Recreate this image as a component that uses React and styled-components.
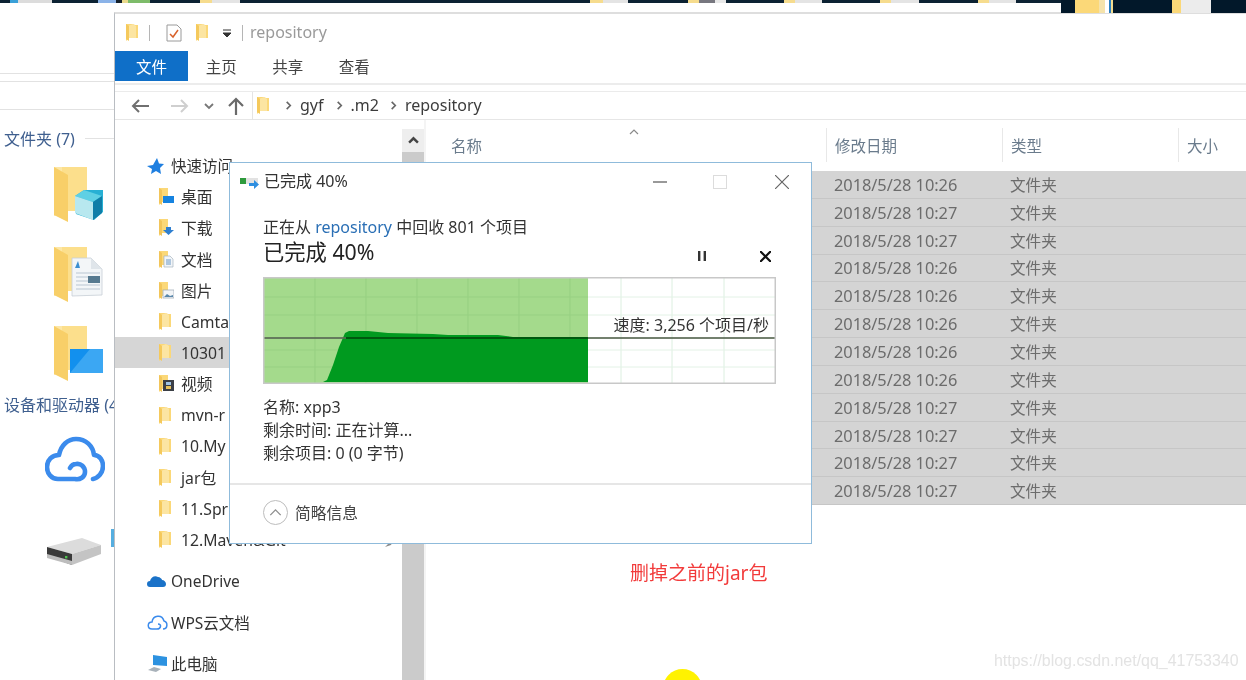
import React from "react";
import styled, { createGlobalStyle } from "styled-components";

const GlobalStyle = createGlobalStyle`
  html, body { margin: 0; padding: 0; background: #fff; }
  * { box-sizing: border-box; }
`;

const FONT = `"Noto Sans", "Noto Sans CJK SC", sans-serif`;

const Desktop = styled.div`
  position: relative;
  width: 1246px;
  height: 680px;
  overflow: hidden;
  background: #fff;
  font-family: ${FONT};
  display: flex;
  flex-direction: column;
  filter: blur(0.45px);
`;

const TopStrip = styled.div`
  flex: none;
  height: 12px;
`;
const StripBand = styled.div`
  height: 3px;
  background: linear-gradient(90deg,
    #0c2233 0 10px, #3aa0d8 10px 18px, #dcdcdc 18px 52px, #0c2233 52px 98px,
    #8bb3e8 98px 116px, #15202a 116px 122px, #e9d98c 122px 128px, #7ebc6a 128px 150px,
    #0c2233 150px 200px, #f6dc8e 200px 212px, #e4e4e4 212px 240px, #0c2233 240px 590px,
    #f6dc8e 590px 603px, #e4e4e4 603px 628px, #0c2233 628px 688px,
    #f6dc8e 688px 699px, #77777f 699px 715px, #e8e8e8 715px 726px, #0c2233 726px 784px,
    #f6dc8e 784px 795px, #e4e4e4 795px 822px, #0c2233 822px 880px,
    #f6dc8e 880px 891px, #e4e4e4 891px 919px, #0c2233 919px 978px,
    #f6dc8e 978px 989px, #e4e4e4 989px 1016px, #0c2233 1016px);
`;
const CornerThumbs = styled.div`
  position: absolute;
  top: 0;
  left: 1061px;
  width: 185px;
  height: 13px;
  background: linear-gradient(90deg,
    #02182a 0 14px, #fbd878 14px 38px, #f5e3ab 38px 44px, #ffffff 44px 48px, #2a80c0 48px 50px, #f5dc8e 50px 52px,
    #02182a 52px 111px, #fbd878 111px 120px, #ececec 120px 150px, #02182a 150px);
`;

const Body = styled.div`
  flex: 1;
  display: flex;
  min-height: 0;
`;

/* window behind the explorer */
const BackPanel = styled.div`
  flex: none;
  width: 114px;
  display: flex;
  flex-direction: column;
  overflow: hidden;
  position: relative;
`;
const PanelRule = styled.div`
  height: 1px;
  background: #e2e2e2;
  margin-top: ${(p) => p.$top}px;
`;
const GroupHead = styled.div`
  display: flex;
  align-items: center;
  height: 22px;
  padding-left: 4px;
  margin-top: ${(p) => p.$top}px;
  color: #3f5f8f;
  font-size: 16px;
  white-space: nowrap;
  &::after {
    content: "";
    flex: 1;
    height: 1px;
    background: #e2e2e2;
    margin-left: 10px;
  }
`;
const BigIcon = styled.div`
  flex: none;
  margin-top: ${(p) => p.$top}px;
  margin-left: ${(p) => p.$left}px;
  line-height: 0;
`;
const EdgeSliver = styled.div`
  position: absolute;
  left: 111px;
  top: 517px;
  width: 3px;
  height: 18px;
  background: #55aee0;
`;

/* explorer */
const Explorer = styled.div`
  flex: 1;
  min-width: 0;
  display: flex;
  flex-direction: column;
  border-top: 2px solid #dedede;
  border-left: 1px solid #b9bdc2;
`;
const TitleBar = styled.div`
  flex: none;
  height: 37px;
  display: flex;
  align-items: center;
  padding-left: 11px;
`;
const TitleSep = styled.span`
  width: 1px;
  height: 16px;
  background: #b5b5b5;
  margin: 0 ${(p) => p.$r}px 0 ${(p) => p.$l}px;
`;
const TitleText = styled.span`
  font-size: 16px;
  color: #9a9a9a;
  margin-bottom: 2px;
`;
const Ribbon = styled.div`
  flex: none;
  height: 30px;
  display: flex;
  align-items: stretch;
`;
const FileTab = styled.div`
  width: 73px;
  background: #0f6fc8;
  color: #fff;
  font-size: 15.5px;
  display: flex;
  align-items: center;
  justify-content: center;
`;
const RibbonTab = styled.div`
  width: 66.5px;
  color: #444;
  font-size: 15.5px;
  display: flex;
  align-items: center;
  justify-content: center;
  &:first-of-type { margin-left: -1px; }
`;
const RibbonSpacer = styled.div`
  flex: none;
  height: 9px;
  margin-top: 2px;
  border-top: 2px solid #ececec;
  border-bottom: 1px solid #ebebeb;
`;
const AddressRow = styled.div`
  flex: none;
  height: 28px;
  display: flex;
  align-items: center;
  border-bottom: 1px solid #e6e6e6;
`;
const NavButton = styled.span`
  display: inline-flex;
  width: ${(p) => p.$w}px;
  margin-left: ${(p) => p.$left}px;
  color: ${(p) => p.$c};
  line-height: 0;
`;
const AddressBox = styled.div`
  height: 28px;
  margin-left: 8px;
  padding-left: 4px;
  flex: 1;
  display: flex;
  align-items: center;
  border-left: 1px solid #e4e4e4;
  font-size: 16px;
  color: #3c3c3c;
`;
const Crumb = styled.span`
  margin-left: 7px;
  margin-right: 7px;
  margin-bottom: 1px;
`;
const CrumbArrow = styled.span`
  display: inline-flex;
  margin-left: ${(p) => p.$left || 0}px;
  color: #666;
  line-height: 0;
`;

const Split = styled.div`
  flex: 1;
  min-height: 0;
  display: flex;
`;
const Sidebar = styled.div`
  flex: none;
  width: 287px;
  padding-top: 30px;
  overflow: hidden;
  position: relative;
`;
const RootRow = styled.div`
  height: 31.2px;
  margin-bottom: ${(p) => p.$after || 0}px;
  margin-top: ${(p) => p.$before || 0}px;
  display: flex;
  align-items: center;
  padding-left: 32px;
  color: #333;
  font-size: 15.5px;
  white-space: nowrap;
`;
const RootIcon = styled.span`
  flex: none;
  width: 24px;
  display: inline-flex;
  line-height: 0;
`;
const NavRow = styled.div`
  height: 31.2px;
  display: flex;
  align-items: center;
  gap: 7px;
  padding-left: 44px;
  color: #333;
  font-size: 15.75px;
  white-space: nowrap;
  background: ${(p) => (p.$active ? "#d6d6d6" : "transparent")};
`;
const IconSlot = styled.span`
  flex: none;
  width: 15px;
  display: inline-flex;
  line-height: 0;
`;
const PinMark = styled.span`
  position: absolute;
  left: 270px;
  top: 421px;
  line-height: 0;
  color: #8a8a8a;
`;
const Scrollbar = styled.div`
  flex: none;
  width: 24px;
  padding-top: 9px;
  display: flex;
  flex-direction: column;
  border-right: 2px solid #f4f4f4;
`;
const ScrollUp = styled.div`
  flex: none;
  height: 23px;
  background: #eeeeee;
  color: #444;
  display: flex;
  align-items: center;
  justify-content: center;
`;
const ScrollThumb = styled.div`
  flex: 1;
  background: #cbcbcb;
`;
const FileArea = styled.div`
  flex: 1;
  min-width: 0;
  display: flex;
  flex-direction: column;
`;
const HeaderRow = styled.div`
  flex: none;
  height: 51px;
  display: grid;
  grid-template-columns: 400px 176px 176px 1fr;
  position: relative;
  padding-top: 8px;
`;
const HeaderCell = styled.div`
  height: 34px;
  display: flex;
  align-items: center;
  padding-left: ${(p) => p.$pad}px;
  color: #6a7b8c;
  font-size: 15.5px;
  border-left: ${(p) => (p.$first ? "none" : "1px solid #e8e8e8")};
`;
const SortCaret = styled.span`
  position: absolute;
  left: 203px;
  top: 7px;
  line-height: 0;
  color: #8a8a8a;
`;
const FileRow = styled.div`
  height: 27.85px;
  display: grid;
  grid-template-columns: 400px 176px 1fr;
  align-items: center;
  background: #d4d4d4;
  border-bottom: 1px solid #c6c6c6;
  color: #6c6c6c;
`;
const DateCell = styled.span`
  grid-column: 2;
  padding-left: 8px;
  font-size: 16.4px;
  letter-spacing: -0.05px;
`;
const TypeCell = styled.span`
  padding-left: 8px;
  font-size: 15.6px;
`;

/* recycle progress dialog */
const Dialog = styled.div`
  position: absolute;
  left: 229px;
  top: 162px;
  width: 583px;
  height: 382px;
  background: #fff;
  border: 1.5px solid #8fbbdb;
  display: flex;
  flex-direction: column;
`;
const DialogTitle = styled.div`
  flex: none;
  height: 37px;
  display: flex;
  align-items: center;
  padding-left: 10px;
  font-size: 16px;
  color: #333;
`;
const DialogTitleText = styled.span`
  margin-left: 4px;
  margin-bottom: 3px;
  flex: 1;
`;
const WinControl = styled.span`
  display: inline-flex;
  width: ${(p) => p.$w}px;
  color: ${(p) => p.$c};
  line-height: 0;
`;
const DialogBody = styled.div`
  flex: none;
  padding: 16px 0 0 33px;
  width: 546px;
`;
const Message = styled.div`
  height: 23px;
  line-height: 23px;
  font-size: 16px;
  color: #333;
`;
const SourceLink = styled.span`
  color: #2a6fb5;
`;
const HeadingRow = styled.div`
  height: 30px;
  display: flex;
  align-items: center;
`;
const Heading = styled.div`
  flex: 1;
  font-size: 21.3px;
  line-height: 26px;
  padding-bottom: 4px;
  color: #222;
`;
const ActionButton = styled.span`
  display: inline-flex;
  width: ${(p) => p.$w}px;
  line-height: 0;
  color: #111;
  margin-top: 4px;
`;
const Chart = styled.div`
  position: relative;
  margin-top: 8px;
  width: 513px;
  height: 107px;
  line-height: 0;
`;
const SpeedLabel = styled.span`
  position: absolute;
  right: 7px;
  top: 36px;
  font-size: 16px;
  line-height: 24px;
  color: #333;
  white-space: nowrap;
`;
const Details = styled.div`
  margin-top: 12px;
`;
const DetailLine = styled.div`
  height: 23px;
  line-height: 23px;
  font-size: 16px;
  color: #333;
`;
const DialogFooter = styled.div`
  margin-top: 18px;
  flex: 1;
  border-top: 2px solid #e6e6e6;
  display: flex;
  align-items: center;
  padding-left: 33px;
  gap: 7px;
  color: #444;
  font-size: 15.75px;
  padding-bottom: 3px;
`;
const FoldCircle = styled.span`
  width: 25px;
  height: 25px;
  border-radius: 50%;
  border: 1.5px solid #bdbdbd;
  color: #8d8d8d;
  display: inline-flex;
  align-items: center;
  justify-content: center;
`;

const Annotation = styled.div`
  position: absolute;
  left: 630px;
  top: 560px;
  font-size: 19px;
  line-height: 26px;
  color: #f23b3b;
  white-space: nowrap;
`;
const Watermark = styled.div`
  position: absolute;
  left: 994px;
  top: 651px;
  font-family: "Liberation Sans", sans-serif;
  font-size: 15.95px;
  line-height: 20px;
  color: #e3e3e3;
  white-space: nowrap;
`;
const CursorDot = styled.div`
  position: absolute;
  left: 663px;
  top: 669px;
  width: 39px;
  height: 39px;
  border-radius: 50%;
  background: #fff200;
`;

/* drawings */
const Folder = ({ w = 12, h = 17 }) => (
  <svg width={w} height={h} viewBox="0 0 12 17" style={{ flex: "none" }}>
    <path d="M0 0h7l2 1h3v13H3l-3 3z" fill="#fbd878" />
    <path d="M7 0l3 2v12H2V2z" fill="#fde9ad" opacity=".8" />
    <path d="M0 0l3 2v15l-3-2z" fill="#f5c95c" />
  </svg>
);

const NavIcon = ({ kind }) => (
  <svg width="15" height="17" viewBox="0 0 15 17" style={{ flex: "none" }}>
    <path d="M0 0h9v14H3l-3 3z" fill="#fbd878" />
    <path d="M0 0l3 2v15l-3-2z" fill="#f2c55a" />
    {kind === "desk" && <rect x="4" y="8" width="11" height="7" fill="#1683e0" />}
    {kind === "down" && <path d="M7 8h5v3h3l-5.5 5-5.5-5h3z" fill="#2f7fd0" />}
    {kind === "doc" && (
      <g>
        <path d="M5 5h6l3 3v8H5z" fill="#f2f5f8" stroke="#a8b4c0" strokeWidth=".7" />
        <path d="M7 9h5M7 11h5M7 13h5" stroke="#5b8fc0" strokeWidth=".9" />
      </g>
    )}
    {kind === "pic" && (
      <g>
        <rect x="4" y="8" width="11" height="8" fill="#f3f5f7" stroke="#9aa6b2" strokeWidth=".7" />
        <path d="M5 15l3-3 3 2 3-1v2z" fill="#5a87aa" />
      </g>
    )}
    {kind === "video" && (
      <g>
        <rect x="4" y="5" width="11" height="11" fill="#3b3f46" />
        <rect x="7" y="7" width="5" height="3" fill="#9fc4e6" />
        <rect x="7" y="11" width="5" height="3" fill="#e9c25c" />
      </g>
    )}
  </svg>
);

const BigFolder = ({ children, w = 50 }) => (
  <svg width={w} height="56" viewBox="0 0 50 56">
    <path d="M0 1h33v44H12L0 50z" fill="#fde7a6" />
    <path d="M8 1h25v44H8z" fill="#fcdf8c" />
    <path d="M0 1l14 8v47L0 49z" fill="#f8cf68" />
    {children}
  </svg>
);

const Cloud = () => (
  <svg width="60" height="46" viewBox="0 0 60 46">
    <path
      d="M30 43H13C6 43 2 37 2 31c0-7 5-12 12-12 2-10 9-16 17-16 10 0 17 7 18 16 6 0 9 6 9 11 0 7-5 12-10 13M30 43c5 1 10-2 10-7s-4-9-9-8c-3 0-5 2-6 4"
      fill="none"
      stroke="#3b8bec"
      strokeWidth="4.6"
      strokeLinecap="round"
      strokeLinejoin="round"
    />
  </svg>
);

const Drive = () => (
  <svg width="56" height="28" viewBox="0 0 56 28">
    <path d="M1 10L36 1l19 7-29 9z" fill="#dcdcdc" />
    <path d="M1 10l25 7v11L1 19z" fill="#3a3a3a" />
    <path d="M26 17l29-9v9L26 28z" fill="#c4c4c4" />
    <path d="M1 17l25 7v4L1 21z" fill="#bdbdbd" />
    <rect x="19" y="19" width="2.4" height="2.4" fill="#4fc24f" />
  </svg>
);

const ArrowLeftIcon = ({ c }) => (
  <svg width="18" height="14" viewBox="0 0 18 14" fill="none" stroke={c} strokeWidth="2">
    <path d="M18 7H2M8 1L2 7l6 6" />
  </svg>
);
const ArrowRightIcon = ({ c }) => (
  <svg width="18" height="14" viewBox="0 0 18 14" fill="none" stroke={c} strokeWidth="2">
    <path d="M0 7h16M10 1l6 6-6 6" />
  </svg>
);
const ArrowUpIcon = ({ c }) => (
  <svg width="16" height="18" viewBox="0 0 16 18" fill="none" stroke={c} strokeWidth="2.2">
    <path d="M8 18V2M1 9l7-7 7 7" />
  </svg>
);
const Chevron = ({ rot = 0, size = 9, sw = 1.8 }) => (
  <svg width={size} height={size} viewBox="0 0 10 10" fill="none" stroke="currentColor" strokeWidth={sw}
    style={{ transform: `rotate(${rot}deg)` }}>
    <path d="M1 3l4 4 4-4" />
  </svg>
);
const Cross = ({ size = 14, sw = 1.2 }) => (
  <svg width={size} height={size} viewBox="0 0 14 14" stroke="currentColor" strokeWidth={sw}>
    <path d="M0 0l14 14M14 0L0 14" />
  </svg>
);

const NAV = [
  ["desk", "桌面"],
  ["down", "下载"],
  ["doc", "文档"],
  ["pic", "图片"],
  [null, "Camta"],
  [null, "10301", true],
  ["video", "视频"],
  [null, "mvn-r"],
  [null, "10.My"],
  [null, "jar包"],
  [null, "11.Spr"],
  [null, "12.Maven&Git"],
];

const FILE_TIMES = ["10:26", "10:27", "10:27", "10:26", "10:26", "10:26", "10:26", "10:26", "10:27", "10:27", "10:27", "10:27"];

const verticals = [52, 103, 154, 205, 256, 307, 358, 409, 461];
const horizontals = [20, 38, 73, 90];

export default function App() {
  return (
    <Desktop>
      <GlobalStyle />
      <TopStrip>
        <StripBand />
      </TopStrip>
      <CornerThumbs />
      <Body>
        <BackPanel>
          <PanelRule $top={61} />
          <PanelRule $top={7} />
          <PanelRule $top={27} />
          <GroupHead $top={17}>文件夹 (7)</GroupHead>
          <BigIcon $top={17} $left={54}>
            <BigFolder>
              <path d="M30 24l18 0 0 0 1 0v22l-9 8-18-6-1-18z" fill="#27b0d4" />
              <path d="M21 30l9-6 18 6-9 6z" fill="#5fd0e4" />
              <path d="M21 30l18 6v18l-18-7z" fill="#b8e8ef" />
              <path d="M39 36l9-6v17l-9 7z" fill="#0f7ea8" />
            </BigFolder>
          </BigIcon>
          <BigIcon $top={24} $left={54}>
            <BigFolder>
              <path d="M18 12h19l11 11v26l-30 1z" fill="#f3f6f8" stroke="#c6ced6" strokeWidth=".8" />
              <path d="M37 12v11h11" fill="#dfe5ea" />
              <path d="M21 22l3-7 2 7z" fill="#3d8fd0" />
              <path d="M22 27h24M22 31h12M22 35h12M22 39h24M22 43h24" stroke="#b9c6d2" strokeWidth="1" />
              <rect x="34" y="30" width="12" height="7" fill="#567a90" />
            </BigFolder>
          </BigIcon>
          <BigIcon $top={23} $left={54}>
            <BigFolder>
              <rect x="16" y="24" width="33" height="24" fill="#1290ee" />
              <path d="M16 48l20-24h13v24z" fill="#3ba7f3" />
            </BigFolder>
          </BigIcon>
          <GroupHead $top={12}>设备和驱动器 (4</GroupHead>
          <BigIcon $top={21} $left={45}>
            <Cloud />
          </BigIcon>
          <BigIcon $top={55} $left={46}>
            <Drive />
          </BigIcon>
          <EdgeSliver />
        </BackPanel>

        <Explorer>
          <TitleBar>
            <Folder />
            <TitleSep $l={11} $r={16} />
            <svg width="16" height="18" viewBox="0 0 16 18">
              <path d="M1 1h10l4 4v12H1z" fill="#fff" stroke="#9a9a9a" />
              <path d="M4 10l3 3 5-7" fill="none" stroke="#d9622b" strokeWidth="1.5" />
            </svg>
            <span style={{ width: 14 }} />
            <Folder />
            <svg width="10" height="10" viewBox="0 0 10 10" style={{ marginLeft: 14 }}>
              <path d="M1 2h8M1 5h8l-4 4z" stroke="#333" fill="#333" strokeWidth="1" />
            </svg>
            <TitleSep $l={10} $r={7} />
            <TitleText>repository</TitleText>
          </TitleBar>
          <Ribbon>
            <FileTab>文件</FileTab>
            <RibbonTab>主页</RibbonTab>
            <RibbonTab>共享</RibbonTab>
            <RibbonTab>查看</RibbonTab>
          </Ribbon>
          <RibbonSpacer />
          <AddressRow>
            <NavButton $w={18} $left={16} $c="#666">
              <ArrowLeftIcon c="#707070" />
            </NavButton>
            <NavButton $w={18} $left={22} $c="#ccc">
              <ArrowRightIcon c="#cfcfcf" />
            </NavButton>
            <NavButton $w={10} $left={15} $c="#777">
              <Chevron size={10} />
            </NavButton>
            <NavButton $w={16} $left={14} $c="#666">
              <ArrowUpIcon c="#6a6a6a" />
            </NavButton>
            <AddressBox>
              <Folder />
              <CrumbArrow $left={15}><Chevron rot={-90} /></CrumbArrow>
              <Crumb>gyf</Crumb>
              <CrumbArrow $left={4}><Chevron rot={-90} /></CrumbArrow>
              <Crumb>.m2</Crumb>
              <CrumbArrow $left={3}><Chevron rot={-90} /></CrumbArrow>
              <Crumb>repository</Crumb>
            </AddressBox>
          </AddressRow>
          <Split>
            <Sidebar>
              <RootRow>
                <RootIcon>
                  <svg width="17" height="16" viewBox="0 0 17 16">
                    <path d="M10 0l2 5.500 5 .5-4 4 1 6-5-3-5 3 1-5-5-3 6-1z" fill="#1f7fe0" />
                  </svg>
                </RootIcon>
                快速访问
              </RootRow>
              {NAV.map(([kind, label, active]) => (
                <NavRow key={label} $active={active}>
                  <IconSlot>{kind ? <NavIcon kind={kind} /> : <Folder />}</IconSlot>
                  {label}
                </NavRow>
              ))}
              <PinMark>
                <svg width="8" height="6" viewBox="0 0 8 6" fill="currentColor">
                  <path d="M0 6l3-3 1-2 4-1-2 4z" />
                </svg>
              </PinMark>
              <RootRow $before={10} $after={10}>
                <RootIcon>
                  <svg width="19" height="13" viewBox="0 0 19 13">
                    <path d="M3 12a3 3 0 010-6c1-4 5-6 8-4 2 0 4 2 4 3 2 0 4 2 4 4s-1 3-3 3z" fill="#1a72c8" />
                  </svg>
                </RootIcon>
                OneDrive
              </RootRow>
              <RootRow $after={10}>
                <RootIcon>
                  <svg width="21" height="16" viewBox="0 0 21 16" fill="none" stroke="#3b8bec" strokeWidth="1.5">
                    <path d="M10 15H5c-5 0-5-7 0-7 1-7 10-8 12-1 4 1 4 8-1 8" />
                    <path d="M10 15c4 0 5-5 1-5" />
                  </svg>
                </RootIcon>
                WPS云文档
              </RootRow>
              <RootRow>
                <RootIcon>
                  <svg width="20" height="17" viewBox="0 0 20 17">
                    <path d="M6 0l14 2v9l-14-1z" fill="#2d92e0" />
                    <path d="M1 15l6-3 7 2-5 3z" fill="#a9b2ba" />
                  </svg>
                </RootIcon>
                此电脑
              </RootRow>
            </Sidebar>
            <Scrollbar>
              <ScrollUp>
                <Chevron rot={180} size={11} sw={2.2} />
              </ScrollUp>
              <ScrollThumb />
            </Scrollbar>
            <FileArea>
              <HeaderRow>
                <HeaderCell $first $pad={25}>名称</HeaderCell>
                <HeaderCell $pad={8}>修改日期</HeaderCell>
                <HeaderCell $pad={8}>类型</HeaderCell>
                <HeaderCell $pad={8}>大小</HeaderCell>
                <SortCaret>
                  <Chevron rot={180} size={10} sw={1.2} />
                </SortCaret>
              </HeaderRow>
              {FILE_TIMES.map((t, i) => (
                <FileRow key={i}>
                  <DateCell>2018/5/28 {t}</DateCell>
                  <TypeCell>文件夹</TypeCell>
                </FileRow>
              ))}
            </FileArea>
          </Split>
        </Explorer>
      </Body>

      <Dialog>
        <DialogTitle>
          <svg width="20" height="14" viewBox="0 0 20 14">
            <rect x="0" y="3" width="6" height="6" fill="#2e9a3c" />
            <rect x="6" y="3" width="12" height="6" fill="#e2e2e2" />
            <path d="M9 8h5V5l5 4.500-5 4.500v-3H9z" fill="#2f8fe0" />
          </svg>
          <DialogTitleText>已完成 40%</DialogTitleText>
          <WinControl $w={60} $c="#555">
            <svg width="14" height="14" viewBox="0 0 14 14"><path d="M0 7h14" stroke="#555" strokeWidth="1.2" /></svg>
          </WinControl>
          <WinControl $w={62} $c="#ddd">
            <svg width="14" height="14" viewBox="0 0 14 14"><rect x=".5" y=".5" width="13" height="13" fill="none" stroke="#dcdcdc" /></svg>
          </WinControl>
          <WinControl $w={36} $c="#666">
            <Cross size={14} />
          </WinControl>
        </DialogTitle>
        <DialogBody>
          <Message>
            正在从 <SourceLink>repository</SourceLink> 中回收 801 个项目
          </Message>
          <HeadingRow>
            <Heading>已完成 40%</Heading>
            <ActionButton $w={63}>
              <svg width="10" height="10" viewBox="0 0 10 10" fill="#333">
                <rect x="1" y="0" width="2.400" height="10" />
                <rect x="6.600" y="0" width="2.400" height="10" />
              </svg>
            </ActionButton>
            <ActionButton $w={11} style={{ marginRight: 5 }}>
              <Cross size={11} sw={2.800} />
            </ActionButton>
          </HeadingRow>
          <Chart>
            <svg width="513" height="107" viewBox="0 0 513 107">
              <rect width="513" height="107" fill="#fff" />
              <rect width="325" height="107" fill="#a4da8c" />
              {verticals.map((x) => (
                <path key={x} d={`M${x} 0V107`} stroke={x < 325 ? "#95cf80" : "#dcefe0"} strokeWidth="1" />
              ))}
              {horizontals.map((y) => (
                <g key={y}>
                  <path d={`M0 ${y}H325`} stroke="#97d082" strokeWidth="1" />
                  <path d={`M325 ${y}H513`} stroke="#e3f2e6" strokeWidth="1" />
                </g>
              ))}
              <path
                d="M60 105 L64 103 L70 88 L76 70 L82 56 L86 54 L105 54 L125 56 L170 57 L185 58 L235 58 L250 60 L325 61 V105 Z"
                fill="#009a1f"
              />
              <path d="M1 61H513" stroke="#5b6b55" strokeWidth="2" opacity=".85" />
              <path d="M83 61H325" stroke="#00580f" strokeWidth="2" />
              <rect x=".75" y=".75" width="511.500" height="105.500" fill="none" stroke="#c8c8c8" strokeWidth="1.500" />
            </svg>
            <SpeedLabel>速度: 3,256 个项目/秒</SpeedLabel>
          </Chart>
          <Details>
            <DetailLine>名称: xpp3</DetailLine>
            <DetailLine>剩余时间: 正在计算...</DetailLine>
            <DetailLine>剩余项目: 0 (0 字节)</DetailLine>
          </Details>
        </DialogBody>
        <DialogFooter>
          <FoldCircle>
            <Chevron rot={180} size={13} sw={1} />
          </FoldCircle>
          简略信息
        </DialogFooter>
      </Dialog>

      <Annotation>删掉之前的jar包</Annotation>
      <Watermark>https://blog.csdn.net/qq_41753340</Watermark>
      <CursorDot />
    </Desktop>
  );
}
